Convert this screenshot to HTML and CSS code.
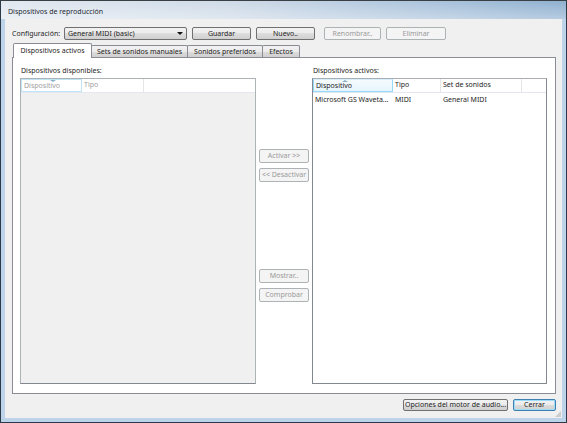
FILE: index.html
```html
<!DOCTYPE html>
<html>
<head>
  <meta charset="utf-8">
  <link rel="stylesheet" href="styles.css">
</head>
<body>
  <div class="window">
    <div class="titlebar">Dispositivos de reproducción</div>

    <div class="client">
      <div class="config-row">
        <span class="config-label">Configuración:</span>
        <div class="combo">
          <span class="combo-text">General MIDI (basic)</span>
          <span class="combo-arrow"></span>
        </div>
        <button class="btn btn-top">Guardar</button>
        <button class="btn btn-top">Nuevo..</button>
        <button class="btn btn-top btn-rename" disabled>Renombrar..</button>
        <button class="btn btn-top btn-delete" disabled>Eliminar</button>
      </div>

      <div class="tabs">
        <div class="tab tab-active">Dispositivos activos</div>
        <div class="tab tab-sets">Sets de sonidos manuales</div>
        <div class="tab tab-pref">Sonidos preferidos</div>
        <div class="tab tab-fx">Efectos</div>
      </div>

      <div class="panel">
        <div class="list-column">
          <div class="list-label">Dispositivos disponibles:</div>
          <div class="list list-disabled">
            <div class="list-header">
              <div class="col col-sorted col-left-name">Dispositivo<span class="sort-down"></span></div>
              <div class="col col-left-type">Tipo</div>
              <div class="col col-fill"></div>
            </div>
          </div>
        </div>

        <div class="middle">
          <div class="middle-group middle-top">
            <button class="btn btn-mid" disabled>Activar &gt;&gt;</button>
            <button class="btn btn-mid" disabled>&lt;&lt; Desactivar</button>
          </div>
          <div class="middle-group middle-bottom">
            <button class="btn btn-mid" disabled>Mostrar..</button>
            <button class="btn btn-mid" disabled>Comprobar</button>
          </div>
        </div>

        <div class="list-column">
          <div class="list-label">Dispositivos activos:</div>
          <div class="list">
            <div class="list-header">
              <div class="col col-sorted col-right-name">Dispositivo<span class="sort-up"></span></div>
              <div class="col col-right-type">Tipo</div>
              <div class="col col-right-set">Set de sonidos</div>
              <div class="col col-fill"></div>
            </div>
            <div class="list-row">
              <div class="cell col-right-name">Microsoft GS Waveta...</div>
              <div class="cell col-right-type">MIDI</div>
              <div class="cell col-right-set">General MIDI</div>
            </div>
          </div>
        </div>
      </div>

      <div class="footer">
        <button class="btn btn-engine">Opciones del motor de audio...</button>
        <button class="btn btn-close">Cerrar</button>
      </div>

      <div class="grip"></div>
    </div>
  </div>
</body>
</html>
```

FILE: styles.css
```css
html, body {
  margin: 0;
  padding: 0;
}

body {
  width: 567px;
  height: 423px;
  overflow: hidden;
  font-family: "Noto Sans", "Open Sans", sans-serif;
  font-size: 7px;
  color: #1e1e1e;
}

.window {
  box-sizing: border-box;
  width: 567px;
  height: 423px;
  display: flex;
  flex-direction: column;
  border: 1px solid #2b3a48;
  border-top-color: #3a3f44;
  padding: 0 4px 4px 4px;
  background: #bcd3ea;
}

.titlebar {
  height: 18px;
  margin: 0 -4px;
  padding-left: 7px;
  line-height: 21px;
  color: #1f2a36;
  background:
    linear-gradient(to bottom, rgba(255,255,255,0) 0%, rgba(255,255,255,0.35) 100%),
    linear-gradient(to right, #e1e8f0 0%, #cfdbe8 40%, #a6c0da 80%, #8fb0d0 100%);
}

.client {
  flex: 1;
  position: relative;
  display: flex;
  flex-direction: column;
  background: #f0f0f0;
  padding: 8px 6px 0 7px;
}

/* ---- top row ---- */

.config-row {
  display: flex;
  align-items: center;
  gap: 5px;
  height: 13px;
}

.config-label {
  width: 47px;
  padding-left: 0;
}

.combo {
  box-sizing: border-box;
  width: 123px;
  height: 13px;
  display: flex;
  align-items: center;
  justify-content: space-between;
  padding: 0 3px 0 3px;
  border: 1px solid #707070;
  border-radius: 2px;
  background: linear-gradient(#f2f2f2 0%, #ebebeb 50%, #dddddd 50%, #cfcfcf 100%);
}

.combo-arrow {
  width: 0;
  height: 0;
  border-left: 3px solid transparent;
  border-right: 3px solid transparent;
  border-top: 3px solid #111;
}

.btn {
  box-sizing: border-box;
  font-family: inherit;
  font-size: 7px;
  color: #1e1e1e;
  padding: 0;
  border: 1px solid #707070;
  border-radius: 2px;
  background: linear-gradient(#f2f2f2 0%, #ebebeb 50%, #dddddd 50%, #cfcfcf 100%);
  line-height: 10px;
}

.btn:disabled {
  color: #9a9a9a;
  border-color: #adb2b5;
  background: #f4f4f4;
}

.btn-top {
  width: 59px;
  height: 13px;
}

.btn-rename {
  width: 57px;
  margin-left: 4px;
}

.btn-delete {
  width: 60px;
}

/* ---- tabs ---- */

.tabs {
  display: flex;
  align-items: flex-end;
  height: 14px;
  margin-top: 3px;
  padding-left: 1px;
}

.tab {
  box-sizing: border-box;
  height: 12px;
  margin-left: -1px;
  border: 1px solid #898c95;
  border-bottom: none;
  border-radius: 2px 2px 0 0;
  background: linear-gradient(#f2f2f2 0%, #ebebeb 50%, #dddddd 50%, #cfcfcf 100%);
  text-align: center;
  line-height: 11px;
}

.tab-active {
  position: relative;
  z-index: 1;
  height: 15px;
  margin-bottom: -1px;
  margin-left: 0;
  width: 79px;
  background: #fff;
  line-height: 14px;
}

.tab-sets { width: 97px; }
.tab-pref { width: 76px; }
.tab-fx { width: 38px; }

/* ---- panel ---- */

.panel {
  box-sizing: border-box;
  height: 337px;
  display: grid;
  grid-template-columns: 236px 56px 235px;
  padding: 8px 8px 9px 7px;
  border: 1px solid #898c95;
  background: #fff;
}

.list-column {
  display: flex;
  flex-direction: column;
}

.list-label {
  height: 12px;
  line-height: 10px;
  padding-left: 1px;
}

.list {
  flex: 1;
  border: 1px solid #828790;
  border-top-color: #abadb3;
  background: #fff;
}

.list-disabled {
  background: #f0f0f0;
  border-color: #adb2b5;
  border-bottom-color: #828790;
}

.list-header {
  display: flex;
  height: 13px;
  border-bottom: 1px solid #e4e8ee;
  background: #fff;
}

.col {
  box-sizing: border-box;
  position: relative;
  height: 13px;
  padding-left: 2px;
  line-height: 12px;
  border-right: 1px solid #e5e5e5;
}

.col-fill {
  flex: 1;
  border-right: none;
}

.col-sorted {
  border: 1px solid #96d9f9;
  border-top-color: #d5eefb;
  background: linear-gradient(#f5fbfe, #e6f5fd);
}

.list-disabled .col {
  color: #a0a0a0;
}

.list-disabled .col-sorted {
  border-color: #bfe4f6;
  background: #fff;
}

.sort-down,
.sort-up {
  position: absolute;
  top: 0;
  left: 28px;
  width: 0;
  height: 0;
  border-left: 3px solid transparent;
  border-right: 3px solid transparent;
}

.sort-down {
  border-top: 2px solid #8ab0c8;
}

.sort-up {
  border-bottom: 2px solid #8ab0c8;
}

.col-left-name { width: 61px; }
.col-left-type { width: 62px; }
.col-right-name { width: 80px; }
.col-right-type { width: 48px; }
.col-right-set { width: 81px; }

.list-row {
  display: flex;
  height: 13px;
  margin-top: 1px;
  line-height: 12px;
}

.cell {
  box-sizing: border-box;
  padding-left: 2px;
  white-space: nowrap;
}

/* ---- middle buttons ---- */

.middle {
  display: flex;
  flex-direction: column;
  align-items: center;
}

.middle-group {
  display: flex;
  flex-direction: column;
  gap: 5px;
}

.middle-top {
  margin-top: 83px;
}

.middle-bottom {
  margin-top: 87px;
}

.btn-mid {
  width: 50px;
  height: 14px;
}

/* ---- footer ---- */

.footer {
  display: flex;
  justify-content: flex-end;
  gap: 5px;
  margin-top: 5px;
}

.btn-engine {
  width: 105px;
  height: 12px;
}

.btn-close {
  width: 43px;
  height: 12px;
  border-color: #3c7fb1;
  box-shadow: inset 0 0 0 1px #9fdcf8;
}

.grip {
  position: absolute;
  right: 1px;
  bottom: 1px;
  width: 6px;
  height: 6px;
  background:
    radial-gradient(circle, #b8b8b8 0.6px, transparent 0.9px) 0 0 / 2px 2px;
  clip-path: polygon(100% 0, 100% 100%, 0 100%);
}
```
